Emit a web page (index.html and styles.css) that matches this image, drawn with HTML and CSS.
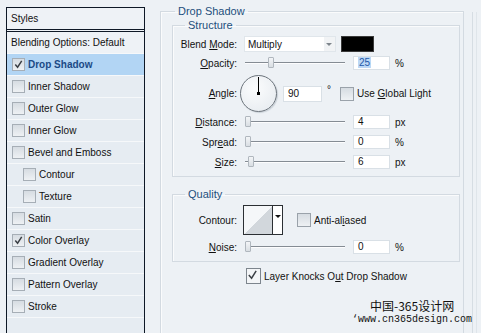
FILE: index.html
```html
<!DOCTYPE html>
<html lang="en">

<head>
    <meta charset="UTF-8">
    <meta name="viewport" content="width=device-width, initial-scale=1.0">
    <title>Layer Style</title>
    <link rel="stylesheet" href="styles.css">
</head>

<body>
    <div class="dialog">
        <div class="styles-list">
            <div class="list-head">Styles</div>
            <div class="list-row blend">Blending Options: Default</div>
            <div class="list-row active"><span class="cb on"><svg viewBox="0 0 12 12"><polyline points="2.5,6 5,9 9.5,2" /></svg></span>Drop Shadow</div>
            <div class="list-row"><span class="cb"></span>Inner Shadow</div>
            <div class="list-row"><span class="cb"></span>Outer Glow</div>
            <div class="list-row"><span class="cb"></span>Inner Glow</div>
            <div class="list-row"><span class="cb"></span>Bevel and Emboss</div>
            <div class="list-row sub"><span class="cb"></span>Contour</div>
            <div class="list-row sub"><span class="cb"></span>Texture</div>
            <div class="list-row"><span class="cb"></span>Satin</div>
            <div class="list-row"><span class="cb on"><svg viewBox="0 0 12 12"><polyline points="2.5,6 5,9 9.5,2" /></svg></span>Color Overlay</div>
            <div class="list-row"><span class="cb"></span>Gradient Overlay</div>
            <div class="list-row"><span class="cb"></span>Pattern Overlay</div>
            <div class="list-row"><span class="cb"></span>Stroke</div>
        </div>

        <div class="panel">
            <fieldset class="group effect">
                <legend>Drop Shadow</legend>

                <fieldset class="group structure">
                    <legend>Structure</legend>

                    <div class="row">
                        <span class="lbl">Blend <u>M</u>ode:</span>
                        <div class="select"><span>Multiply</span><span class="arrow"></span></div>
                        <div class="swatch"></div>
                    </div>

                    <div class="row opacity">
                        <span class="lbl"><u>O</u>pacity:</span>
                        <div class="slider"><span class="thumb" style="left: 23px"></span></div>
                        <div class="num"><span class="sel">25</span></div>
                        <span class="unit">%</span>
                    </div>

                    <div class="row angle">
                        <span class="lbl"><u>A</u>ngle:</span>
                        <div class="dial"></div>
                        <div class="num wide">90</div>
                        <span class="deg">°</span>
                        <span class="cb light"></span>
                        <span class="cb-text">Use <u>G</u>lobal Light</span>
                    </div>

                    <div class="row distance">
                        <span class="lbl"><u>D</u>istance:</span>
                        <div class="slider"><span class="thumb" style="left: 0px"></span></div>
                        <div class="num">4</div>
                        <span class="unit">px</span>
                    </div>

                    <div class="row spaced">
                        <span class="lbl">Spr<u>e</u>ad:</span>
                        <div class="slider"><span class="thumb" style="left: 0px"></span></div>
                        <div class="num">0</div>
                        <span class="unit">%</span>
                    </div>

                    <div class="row spaced">
                        <span class="lbl"><u>S</u>ize:</span>
                        <div class="slider"><span class="thumb" style="left: 3px"></span></div>
                        <div class="num">6</div>
                        <span class="unit">px</span>
                    </div>
                </fieldset>

                <fieldset class="group quality">
                    <legend>Quality</legend>

                    <div class="row contour">
                        <span class="lbl">Contour:</span>
                        <div class="picker"><span class="curve"></span><span class="drop"></span></div>
                        <span class="cb light"></span>
                        <span class="cb-text">Anti-al<u>i</u>ased</span>
                    </div>

                    <div class="row noise">
                        <span class="lbl"><u>N</u>oise:</span>
                        <div class="slider"><span class="thumb" style="left: 0px"></span></div>
                        <div class="num">0</div>
                        <span class="unit">%</span>
                    </div>
                </fieldset>

                <div class="knock">
                    <span class="cb on big"><svg viewBox="0 0 12 12"><polyline points="2,6 5,9.5 10,1.5" /></svg></span>
                    <span class="cb-text">Layer Knocks O<u>u</u>t Drop Shadow</span>
                </div>
            </fieldset>
        </div>

        <div class="edge"></div>
    </div>

    <div class="watermark">
        <div class="wm-cn">中国-365设计网</div>
        <div class="wm-url">‘www.cn365design.com</div>
    </div>
</body>

</html>
```

FILE: styles.css
```css
body {
    margin: 0;
    background-color: #edf1f5;
    font-family: "Liberation Sans", Arial, sans-serif;
    font-size: 10px;
    color: #111;
}

u {
    text-decoration-thickness: 1px;
    text-underline-offset: 1px;
}

.dialog {
    display: flex;
    height: 333px;
    overflow: hidden;
}

/* left style list */
.styles-list {
    margin: 7px 0 0 6px;
    width: 137px;
    border: 1px solid #0e1826;
    border-bottom: none;
    background-color: #e6ecf2;
}

.list-head {
    height: 21px;
    line-height: 21px;
    padding-left: 4px;
    background-color: #eef2f6;
    border-bottom: 3px double #0e1826;
}

.list-row {
    display: flex;
    align-items: center;
    gap: 3px;
    height: 21px;
    padding-left: 5px;
    border-bottom: 1px solid #f6f8fa;
}

.list-row.blend {
    padding-left: 4px;
    background-color: #eef2f6;
}

.list-row.sub {
    padding-left: 16px;
}

.list-row.active {
    background-color: #b2d5f4;
    color: #1b4a86;
    font-weight: bold;
}

/* checkboxes */
.cb {
    display: inline-block;
    flex: none;
    width: 11px;
    height: 11px;
    border: 1px solid #a6aeb6;
    background: linear-gradient(#d6dce2, #eef1f4);
}

.cb svg {
    display: block;
    width: 11px;
    height: 11px;
}

.cb polyline {
    fill: none;
    stroke: #3a3f45;
    stroke-width: 1.6;
}

.cb.light {
    width: 12px;
    height: 12px;
    border-color: #9aa2aa;
}

.cb.big {
    width: 13px;
    height: 14px;
    border-color: #7d858d;
    background: #f3f5f7;
}

.cb.big svg {
    width: 11px;
    height: 12px;
}

.cb-text {
    margin-left: 3px;
}

/* right panel */
.panel {
    margin: 5px 0 0 15px;
}

.group {
    margin: 0;
    border: 1px solid #d3dae1;
    box-shadow: inset 1px 1px 0 #fafbfc;
}

.group legend {
    padding: 0 3px;
    line-height: 13px;
    font-size: 11px;
    color: #1d4f7c;
}

.effect {
    width: 288px;
    height: 400px;
    padding: 0 3px 0 11px;
}

.effect > legend {
    margin-left: 3px;
}

.structure {
    margin-top: 1px;
    padding: 4px 0 7px 0;
}

.structure legend,
.quality legend {
    margin-left: 12px;
}

.quality {
    margin-top: 11px;
    padding: 4px 0 7px 0;
}

.row {
    display: flex;
    align-items: center;
    height: 16px;
}

.lbl {
    width: 64px;
    text-align: right;
    flex: none;
}

.row.opacity {
    height: 14px;
    margin-top: 4px;
}

.row.angle {
    height: 37px;
    margin-top: 5px;
}

.row.distance {
    height: 14px;
    margin-top: 3px;
}

.row.spaced {
    height: 14px;
    margin-top: 6px;
}

.select {
    display: flex;
    align-items: center;
    justify-content: space-between;
    box-sizing: border-box;
    margin-left: 7px;
    width: 92px;
    height: 16px;
    padding-left: 3px;
    background-color: #fff;
    border: 1px solid #e0e6eb;
}

.arrow {
    position: relative;
    width: 11px;
    height: 14px;
    background-color: #f1f3f5;
}

.arrow::after {
    content: "";
    position: absolute;
    left: 2px;
    top: 6px;
    border-left: 3.5px solid transparent;
    border-right: 3.5px solid transparent;
    border-top: 3px solid #7e858c;
}

.swatch {
    margin-left: 5px;
    width: 33px;
    height: 16px;
    box-sizing: border-box;
    background-color: #000;
    border: 1px solid #3a3a3a;
}

.slider {
    position: relative;
    margin-left: 8px;
    width: 100px;
    height: 14px;
    flex: none;
}

.slider::before {
    content: "";
    position: absolute;
    left: 0;
    right: 0;
    top: 6px;
    height: 1px;
    background-color: #858c94;
    box-shadow: 0 1px 0 #fdfdfe;
}

.thumb {
    position: absolute;
    top: 1px;
    width: 6px;
    height: 11px;
    box-sizing: border-box;
    border: 1px solid #b0b7be;
    border-radius: 1px;
    background: linear-gradient(#f3f5f7, #d9dee3);
}

.num {
    box-sizing: border-box;
    margin-left: 8px;
    width: 37px;
    height: 14px;
    padding-left: 4px;
    line-height: 12px;
    background-color: #fff;
    border: 1px solid #d9e0e6;
    flex: none;
}

.num.wide {
    margin-left: 6px;
    width: 39px;
    height: 16px;
    line-height: 14px;
}

.sel {
    background-color: #bcd8f5;
    color: #2458a8;
    padding: 0 1px;
}

.unit {
    margin-left: 5px;
}

.dial {
    position: relative;
    margin-left: 3px;
    width: 37px;
    height: 37px;
    box-sizing: border-box;
    border: 1px solid #6c747c;
    border-radius: 50%;
    background: radial-gradient(circle at 40% 35%, #fbfcfd, #e4e9ee);
    box-shadow: 1px 1px 1px #c8cfd6;
    flex: none;
}

.dial::before {
    content: "";
    position: absolute;
    left: 17px;
    top: 1px;
    width: 1px;
    height: 17px;
    background-color: #000;
}

.dial::after {
    content: "";
    position: absolute;
    left: 16px;
    top: 16px;
    width: 3px;
    height: 3px;
    background-color: #000;
}

.deg {
    margin: 0 9px 0 5px;
    align-self: flex-start;
    margin-top: 9px;
}

.row.contour {
    height: 30px;
}

.picker {
    display: flex;
    margin: 0 14px 0 6px;
    width: 40px;
    height: 30px;
    box-sizing: border-box;
    border: 1px solid #2b2f33;
    flex: none;
}

.curve {
    width: 28px;
    background: linear-gradient(to top left, #d2d7dc 50%, #f5f7f9 50%);
}

.drop {
    position: relative;
    flex: 1;
    background-color: #fff;
    border-left: 1px solid #2b2f33;
}

.drop::after {
    content: "";
    position: absolute;
    left: 2px;
    top: 9px;
    border-left: 3px solid transparent;
    border-right: 3px solid transparent;
    border-top: 3px solid #111;
}

.row.noise {
    height: 14px;
    margin-top: 5px;
}

.knock {
    display: flex;
    align-items: center;
    margin-top: 6px;
    padding-left: 74px;
}

.edge {
    margin: 12px 0 0 8px;
    width: 3px;
    border-left: 1px solid #d6dde3;
    border-right: 1px solid #dfe5ea;
}

/* site watermark laid over the dialog */
.watermark {
    position: absolute;
    left: 352px;
    top: 298px;
    color: #111;
}

.wm-cn {
    margin-left: 18px;
    font-family: "Noto Sans CJK SC", sans-serif;
    font-size: 12px;
    line-height: 16px;
}

.wm-url {
    font-family: "Liberation Mono", monospace;
    font-size: 10px;
    line-height: 12px;
}
```
